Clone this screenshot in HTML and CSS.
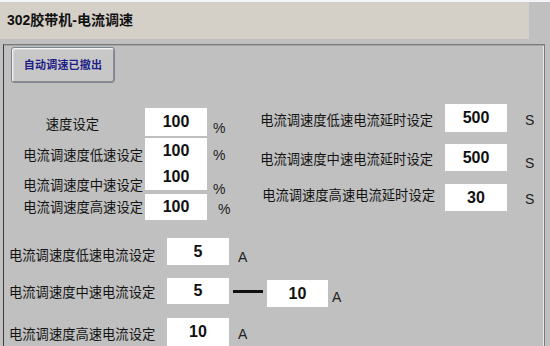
FILE: index.html
```html
<!DOCTYPE html>
<html lang="zh-CN">
<head>
<meta charset="utf-8">
<title>302胶带机-电流调速</title>
<link rel="stylesheet" href="styles.css">
</head>
<body>
<div class="screen">
  <div class="topline"></div>
  <div class="titlebar">302胶带机-电流调速</div>
  <div class="panel">
    <div class="btn">自动调速已撤出</div>

    <div class="upper">
      <div class="col-left">
        <div class="row h28">
          <span class="lbl lbl-l lbl-short mt2">速度设定</span>
          <span class="val w62 h28">100</span>
          <span class="unit ml6 mt6">%</span>
        </div>
        <div class="pair">
          <div class="row h26">
            <span class="lbl lbl-l mt4">电流调速度低速设定</span>
            <span class="val w62 h26">100</span>
            <span class="unit ml6 mt4">%</span>
          </div>
          <div class="row h26">
            <span class="lbl lbl-l mt8">电流调速度中速设定</span>
            <span class="val w62 h26">100</span>
            <span class="unit ml6 mt12">%</span>
          </div>
        </div>
        <div class="row h26 gap4">
          <span class="lbl lbl-l">电流调速度高速设定</span>
          <span class="val w62 h26">100</span>
          <span class="unit ml11 mt2">%</span>
        </div>
      </div>

      <div class="col-right">
        <div class="row h28">
          <span class="lbl lbl-r mt2">电流调速度低速电流延时设定</span>
          <span class="val w62 h28 ml12">500</span>
          <span class="unit ml18 mt2">S</span>
        </div>
        <div class="row h27 gap12">
          <span class="lbl lbl-r mt1">电流调速度中速电流延时设定</span>
          <span class="val w62 h27 ml12">500</span>
          <span class="unit ml18 mt5">S</span>
        </div>
        <div class="row h27 gap13">
          <span class="lbl lbl-r lbl-r3 mtm3">电流调速度高速电流延时设定</span>
          <span class="val w62 h27 ml10">30</span>
          <span class="unit ml18 mt1">S</span>
        </div>
      </div>
    </div>

    <div class="lower">
      <div class="row h27">
        <span class="lbl lbl-b mt3">电流调速度低速电流设定</span>
        <span class="val w62 h27">5</span>
        <span class="unit ml9 mt5">A</span>
      </div>
      <div class="row row-top gap13">
        <span class="lbl lbl-b lbl-b-top">电流调速度中速电流设定</span>
        <span class="val w62 h26">5</span>
        <span class="dash"></span>
        <span class="val w61 h27 mt2">10</span>
        <span class="unit ml4 unit-b">A</span>
      </div>
      <div class="row h28 gap11">
        <span class="lbl lbl-b mt2">电流调速度高速电流设定</span>
        <span class="val w62 h28">10</span>
        <span class="unit ml9 mt2">A</span>
      </div>
    </div>
  </div>
</div>
</body>
</html>
```

FILE: styles.css
```css
html, body {
  margin: 0;
  padding: 0;
}

body {
  background: #c0c0c0;
  font-family: "Noto Sans CJK SC", "Liberation Sans", sans-serif;
  color: #111;
}

.screen {
  width: 550px;
  height: 346px;
  overflow: hidden;
  background: #c0c0c0;
}

.topline {
  height: 2px;
  background: #f2f4f7;
}

.titlebar {
  width: 522px;
  height: 37px;
  padding-left: 7px;
  background: #d4d0c8;
  font-family: "Liberation Sans", "Noto Sans CJK SC", sans-serif;
  font-weight: bold;
  font-size: 14px;
  line-height: 37px;
  color: #111;
}

.panel {
  margin-top: 5px;
  margin-left: 3px;
  width: 540px;
  height: 320px;
  border-top: 1px solid #7a7a7a;
  border-left: 1px solid #3c3c3c;
  border-right: 1px solid #7a7a7a;
  box-shadow: inset 0 1px 0 #a6a6a6, inset -1px 0 0 #e8e8e8;
}

/* button */
.btn {
  box-sizing: border-box;
  margin: 2px 0 0 7px;
  width: 104px;
  height: 36px;
  border: 1px solid #7c8494;
  border-radius: 3px;
  background: #c7c7c7;
  box-shadow: inset 1px 1px 0 #f2f2f2, inset -1px -1px 0 #8e8e8e, inset 2px 2px 0 #d8d8d8;
  color: #1e1e86;
  font-weight: bold;
  font-size: 11px;
  line-height: 32px;
  text-align: center;
  letter-spacing: 0.2px;
}

/* layout sections */
.upper {
  display: flex;
  margin-top: 21px;
  height: 116px;
}

.col-left {
  width: 246px;
  padding-top: 4px;
  display: flex;
  flex-direction: column;
}

.col-right {
  display: flex;
  flex-direction: column;
}

.pair {
  margin-top: 2px;
  display: flex;
  flex-direction: column;
}

.lower {
  margin-top: 18px;
  display: flex;
  flex-direction: column;
}

.row {
  display: flex;
  align-items: center;
}

.row-top {
  align-items: flex-start;
}

.gap4 { margin-top: 4px; }
.gap11 { margin-top: 11px; }
.gap12 { margin-top: 12px; }
.gap13 { margin-top: 13px; }

/* labels */
.lbl {
  font-size: 13.3px;
  line-height: 14px;
  white-space: nowrap;
  color: #141414;
}

.lbl-l {
  width: 139px;
  text-align: right;
  margin-right: 2px;
}

.lbl-short {
  box-sizing: border-box;
  padding-right: 44px;
}

.lbl-r {
  width: 183px;
  text-align: right;
}

.lbl-r3 {
  width: 185px;
}

.lbl-b {
  width: 158px;
  padding-left: 5px;
}

.lbl-b-top {
  margin-top: 7px;
}

/* values */
.val {
  display: flex;
  align-items: center;
  justify-content: center;
  background: #ffffff;
  font-family: "Liberation Sans", Arial, sans-serif;
  font-weight: bold;
  font-size: 16px;
  color: #111;
}

.w62 { width: 62px; }
.w61 { width: 61px; }
.h26 { height: 26px; }
.h27 { height: 27px; }
.h28 { height: 28px; }

.unit {
  font-family: "Liberation Sans", Arial, sans-serif;
  font-size: 14px;
  line-height: 14px;
  color: #222;
}

.unit-b {
  margin-top: 12px;
}

.dash {
  width: 30px;
  height: 3px;
  margin: 12px 4px 0 4px;
  background: #111;
}

/* fine offsets */
.ml4 { margin-left: 4px; }
.ml6 { margin-left: 6px; }
.ml9 { margin-left: 9px; }
.ml10 { margin-left: 10px; }
.ml11 { margin-left: 11px; }
.ml12 { margin-left: 12px; }
.ml18 { margin-left: 18px; }

.mt1 { margin-top: 2px; }
.mt2 { margin-top: 4px; }
.mt3 { margin-top: 6px; }
.mt4 { margin-top: 8px; }
.mt5 { margin-top: 10px; }
.mt6 { margin-top: 12px; }
.mt8 { margin-top: 16px; }
.mt12 { margin-top: 24px; }
.mtm3 { margin-bottom: 6px; }

.val.mt2 { margin-top: 2px; }
```
